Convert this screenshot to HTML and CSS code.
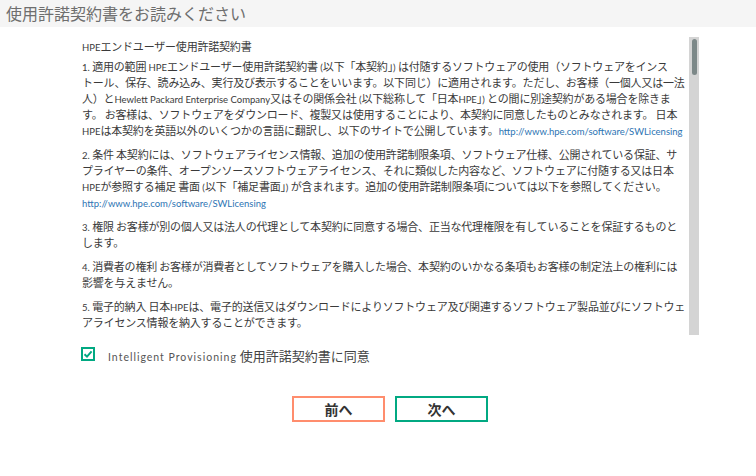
FILE: index.html
```html
<!DOCTYPE html>
<html lang="ja">
<head>
<meta charset="utf-8">
<title>使用許諾契約書</title>
<link rel="stylesheet" href="styles.css">
</head>
<body>
<div class="titlebar">使用許諾契約書をお読みください</div>
<div class="main">
  <div class="doc">
    <div class="text">
      <p class="heading"><span class="en">HPE</span>エンドユーザー使用許諾契約書</p>
      <p><span class="en">1. </span>適用の範囲 <span class="en">HPE</span>エンドユーザー使用許諾契約書<span class="en"> (</span>以下「本契約」<span class="en">) </span>は付随するソフトウェアの使用（ソフトウェアをインス<br>トール、保存、読み込み、実行及び表示することをいいます。以下同じ）に適用されます。ただし、お客様（一個人又は一法<br>人）と<span class="en">Hewlett Packard Enterprise Company</span>又はその関係会社<span class="en"> (</span>以下総称して「日本<span class="en">HPE</span>」<span class="en">) </span>との間に別途契約がある場合を除きま<br>す。 お客様は、ソフトウェアをダウンロード、複製又は使用することにより、本契約に同意したものとみなされます。 日本<br><span class="en">HPE</span>は本契約を英語以外のいくつかの言語に翻訳し、以下のサイトで公開しています。<a class="link" href="#">http://www.hpe.com/software/SWLicensing</a></p>
      <p><span class="en">2. </span>条件 本契約には、ソフトウェアライセンス情報、追加の使用許諾制限条項、ソフトウェア仕様、公開されている保証、サ<br>プライヤーの条件、オープンソースソフトウェアライセンス、それに類似した内容など、ソフトウェアに付随する又は日本<br><span class="en">HPE</span>が参照する補足 書面<span class="en"> (</span>以下「補足書面」<span class="en">) </span>が含まれます。追加の使用許諾制限条項については以下を参照してください。<br><a class="link" href="#">http://www.hpe.com/software/SWLicensing</a></p>
      <p><span class="en">3. </span>権限 お客様が別の個人又は法人の代理として本契約に同意する場合、正当な代理権限を有していることを保証するものと<br>します。</p>
      <p><span class="en">4. </span>消費者の権利 お客様が消費者としてソフトウェアを購入した場合、本契約のいかなる条項もお客様の制定法上の権利には<br>影響を与えません。</p>
      <p><span class="en">5. </span>電子的納入 日本<span class="en">HPE</span>は、電子的送信又はダウンロードによりソフトウェア及び関連するソフトウェア製品並びにソフトウェ<br>アライセンス情報を納入することができます。</p>
    </div>
    <div class="scrollbar"><div class="thumb"></div></div>
  </div>
  <label class="agree">
    <span class="check"><svg width="10" height="10" viewBox="0 0 10 10"><path d="M1.5 5.2 L4 7.6 L8.6 2.4" fill="none" stroke="#01a982" stroke-width="2"/></svg></span>
    <span class="agree-text"><span class="agree-en">Intelligent Provisioning</span> 使用許諾契約書に同意</span>
  </label>
  <div class="buttons">
    <button class="btn prev">前へ</button>
    <button class="btn next">次へ</button>
  </div>
</div>
</body>
</html>
```
FILE: styles.css
```css
html, body {
  margin: 0;
  padding: 0;
  background: #ffffff;
}
body {
  font-family: "Noto Sans CJK JP", "Noto Sans", sans-serif;
  color: #3a3a3a;
}
.titlebar {
  height: 27px;
  line-height: 26px;
  background: #f5f5f5;
  color: #6e6e6e;
  font-size: 16px;
  padding-left: 6px;
}
.main {
  width: 622px;
  padding: 10px 0 0 77px;
}
.doc {
  display: flex;
  height: 298px;
}
.text {
  flex: 1;
  overflow: hidden;
  padding: 1px 0 0 5px;
  font-size: 11px;
  letter-spacing: -0.2px;
  line-height: 16px;
  white-space: nowrap;
}
.text p {
  margin: 0 0 8px 0;
}
.text p.heading {
  margin-bottom: 4px;
}
.en {
  font-family: "Lato", "Noto Sans", sans-serif;
  font-size: 9.5px;
  letter-spacing: 0;
  line-height: 1;
}
.link {
  font-family: "Lato", "Noto Sans", sans-serif;
  font-size: 9.5px;
  letter-spacing: 0;
  line-height: 1;
  color: #2c74b3;
  text-decoration: none;
}
.scrollbar {
  width: 10px;
  background: #d4d4d4;
  display: flex;
  justify-content: center;
  align-items: flex-start;
  padding-top: 2px;
  box-sizing: border-box;
}
.thumb {
  width: 5px;
  height: 36px;
  border-radius: 3px;
  background: #7c8888;
}
.agree {
  display: flex;
  align-items: center;
  margin-top: 11px;
  padding-left: 4px;
}
.check {
  width: 14px;
  height: 14px;
  box-sizing: border-box;
  border: 2px solid #01a982;
  display: flex;
  align-items: center;
  justify-content: center;
  margin-right: 13px;
  margin-bottom: 6px;
}
.agree-text {
  font-size: 13px;
  line-height: 19px;
  color: #444444;
}
.agree-en {
  font-family: "Lato", "Noto Sans", sans-serif;
  font-size: 10.5px;
  letter-spacing: 1px;
  color: #555555;
}
.buttons {
  display: flex;
  justify-content: center;
  gap: 10px;
  margin-top: 29px;
  padding-left: 4px;
}
.btn {
  width: 93px;
  height: 26px;
  background: #ffffff;
  font-family: "Noto Sans CJK JP", sans-serif;
  font-size: 14px;
  font-weight: bold;
  color: #333333;
  padding: 0;
  line-height: 20px;
}
.prev {
  border: 2px solid #ff8d6d;
}
.next {
  border: 2px solid #01a982;
}
```
